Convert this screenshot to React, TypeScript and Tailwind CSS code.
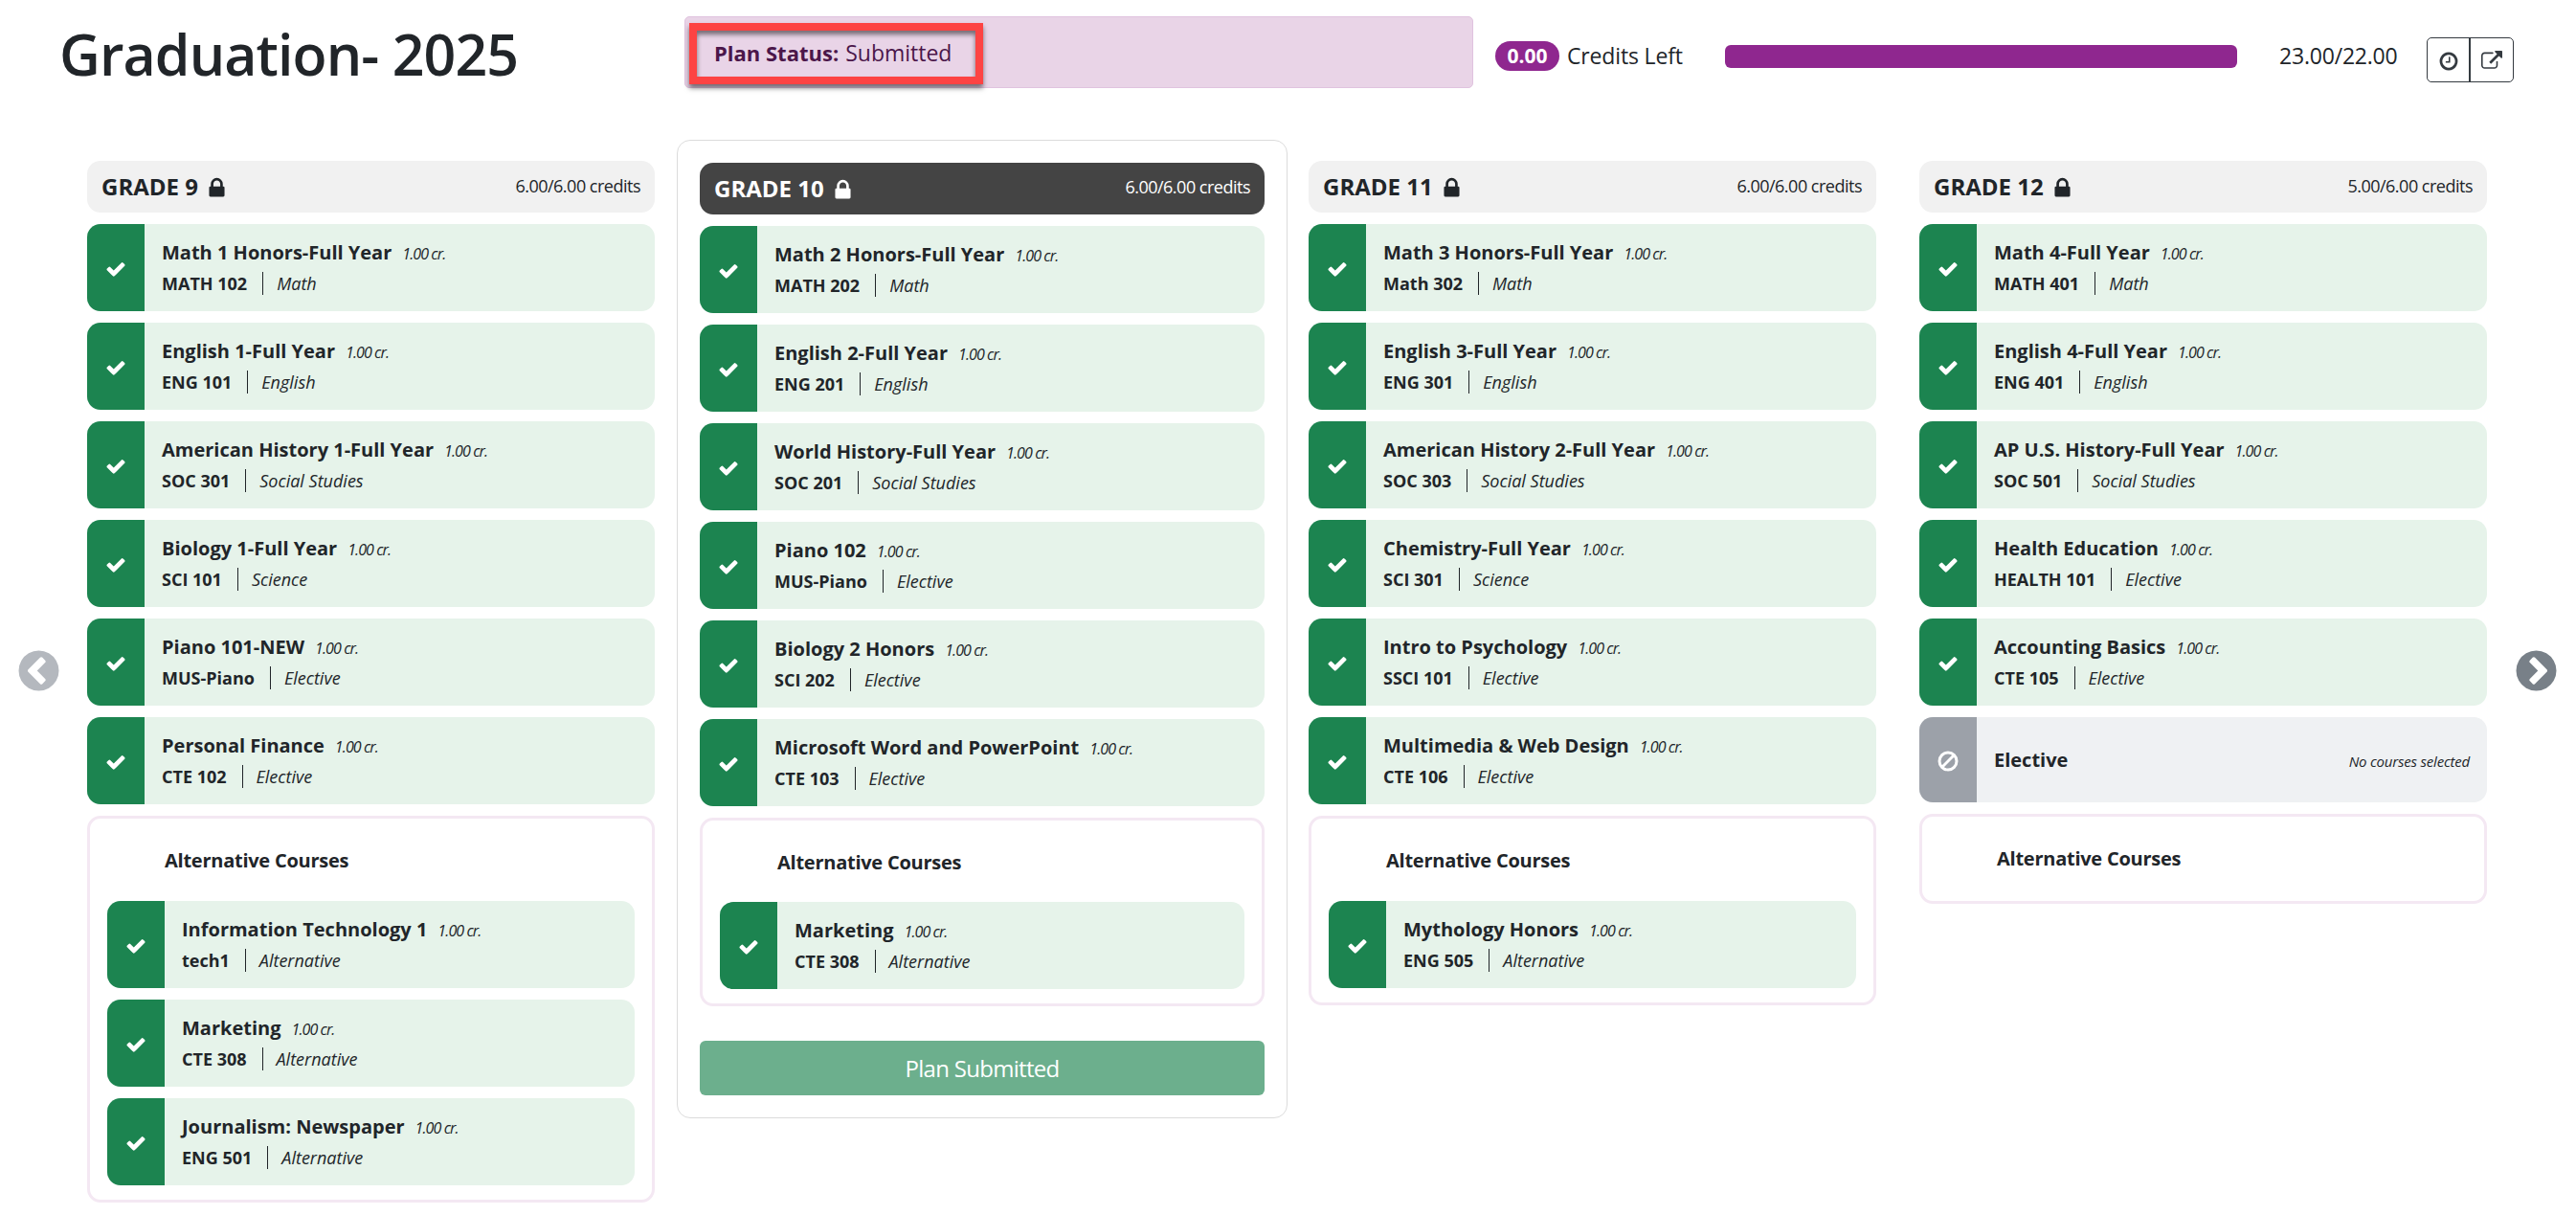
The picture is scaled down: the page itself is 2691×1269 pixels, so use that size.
interface Course {
  name: string;
  code: string;
  subject: string;
}

interface Grade {
  title: string;
  credits: string;
  current?: boolean;
  courses: Course[];
  emptySlot?: string;
  alternatives: Course[];
}

const c = (name: string, code: string, subject: string): Course => ({ name, code, subject });

const grades: Grade[] = [
  {
    title: 'GRADE 9',
    credits: '6.00/6.00 credits',
    courses: [
      c('Math 1 Honors-Full Year', 'MATH 102', 'Math'),
      c('English 1-Full Year', 'ENG 101', 'English'),
      c('American History 1-Full Year', 'SOC 301', 'Social Studies'),
      c('Biology 1-Full Year', 'SCI 101', 'Science'),
      c('Piano 101-NEW', 'MUS-Piano', 'Elective'),
      c('Personal Finance', 'CTE 102', 'Elective'),
    ],
    alternatives: [
      c('Information Technology 1', 'tech1', 'Alternative'),
      c('Marketing', 'CTE 308', 'Alternative'),
      c('Journalism: Newspaper', 'ENG 501', 'Alternative'),
    ],
  },
  {
    title: 'GRADE 10',
    credits: '6.00/6.00 credits',
    current: true,
    courses: [
      c('Math 2 Honors-Full Year', 'MATH 202', 'Math'),
      c('English 2-Full Year', 'ENG 201', 'English'),
      c('World History-Full Year', 'SOC 201', 'Social Studies'),
      c('Piano 102', 'MUS-Piano', 'Elective'),
      c('Biology 2 Honors', 'SCI 202', 'Elective'),
      c('Microsoft Word and PowerPoint', 'CTE 103', 'Elective'),
    ],
    alternatives: [c('Marketing', 'CTE 308', 'Alternative')],
  },
  {
    title: 'GRADE 11',
    credits: '6.00/6.00 credits',
    courses: [
      c('Math 3 Honors-Full Year', 'Math 302', 'Math'),
      c('English 3-Full Year', 'ENG 301', 'English'),
      c('American History 2-Full Year', 'SOC 303', 'Social Studies'),
      c('Chemistry-Full Year', 'SCI 301', 'Science'),
      c('Intro to Psychology', 'SSCI 101', 'Elective'),
      c('Multimedia & Web Design', 'CTE 106', 'Elective'),
    ],
    alternatives: [c('Mythology Honors', 'ENG 505', 'Alternative')],
  },
  {
    title: 'GRADE 12',
    credits: '5.00/6.00 credits',
    courses: [
      c('Math 4-Full Year', 'MATH 401', 'Math'),
      c('English 4-Full Year', 'ENG 401', 'English'),
      c('AP U.S. History-Full Year', 'SOC 501', 'Social Studies'),
      c('Health Education', 'HEALTH 101', 'Elective'),
      c('Accounting Basics', 'CTE 105', 'Elective'),
    ],
    emptySlot: 'Elective',
    alternatives: [],
  },
];

// Font Awesome 4 shapes on the 1792 grid
const icons = {
  check:
    'M1671 566q0 40-28 68l-724 724-136 136q-28 28-68 28t-68-28l-136-136-362-362q-28-28-28-68t28-68l136-136q28-28 68-28t68 28l294 295 656-657q28-28 68-28t68 28l136 136q28 28 28 68z',
  lock: 'M640 768h512v-192q0-106-75-181t-181-75-181 75-75 181v192zm832 96v576q0 40-28 68t-68 28h-960q-40 0-68-28t-28-68v-576q0-40 28-68t68-28h32v-192q0-184 132-316t316-132 316 132 132 316v192h32q40 0 68 28t28 68z',
  clock:
    'M1024 544v448q0 14-9 23t-23 9h-320q-14 0-23-9t-9-23v-64q0-14 9-23t23-9h224v-352q0-14 9-23t23-9h64q14 0 23 9t9 23zm416 352q0-148-73-273t-198-198-273-73-273 73-198 198-73 273 73 273 198 198 273 73 273-73 198-198 73-273zm224 0q0 209-103 385.5t-279.5 279.5-385.5 103-385.5-103-279.5-279.5-103-385.5 103-385.5 279.5-279.5 385.5-103 385.5 103 279.5 279.5 103 385.5z',
  external:
    'M1408 928v320q0 119-84.5 203.5t-203.5 84.5h-832q-119 0-203.5-84.5t-84.5-203.5v-832q0-119 84.5-203.5t203.5-84.5h704q14 0 23 9t9 23v64q0 14-9 23t-23 9h-704q-66 0-113 47t-47 113v832q0 66 47 113t113 47h832q66 0 113-47t47-113v-320q0-14 9-23t23-9h64q14 0 23 9t9 23zm384-864v512q0 26-19 45t-45 19-45-19l-176-176-652 652q-10 10-23 10t-23-10l-114-114q-10-10-10-23t10-23l652-652-176-176q-19-19-19-45t19-45 45-19h512q26 0 45 19t19 45z',
  chevronCircle:
    'M1037 1395l102-102q19-19 19-45t-19-45l-307-307 307-307q19-19 19-45t-19-45l-102-102q-19-19-45-19t-45 19l-454 454q-19 19-19 45t19 45l454 454q19 19 45 19t45-19zm627-499q0 209-103 385.5t-279.5 279.5-385.5 103-385.5-103-279.5-279.5-103-385.5 103-385.5 279.5-279.5 385.5-103 385.5 103 279.5 279.5 103 385.5z',
};

function Icon({ name, size, className }: { name: keyof typeof icons; size: number; className?: string }) {
  return (
    <svg width={size} height={size} viewBox="0 0 1792 1792" fill="currentColor" className={className}>
      <path d={icons[name]} />
    </svg>
  );
}

function CourseCard({ course }: { course: Course }) {
  return (
    <div className="flex h-[91px] overflow-hidden rounded-[14px] bg-[#e6f3ea]">
      <div className="flex w-[60px] shrink-0 items-center justify-center bg-[#1c8450] pt-[3px] text-white">
        <Icon name="check" size={22} />
      </div>
      <div className="flex flex-col pt-[14px] pl-[18px] whitespace-nowrap">
        <div className="flex h-[32px] items-baseline leading-[32px]">
          <span className="text-[20px] font-bold">{course.name}</span>
          <span className="ml-[11px] text-[16px] tracking-[-0.9px] italic">1.00 cr.</span>
        </div>
        <div className="flex h-[32px] items-center leading-[32px]">
          <span className="text-[18px] font-bold">{course.code}</span>
          <span className="mr-[14px] ml-[16px] h-[24px] w-px bg-[#212529]" />
          <span className="text-[18px] italic">{course.subject}</span>
        </div>
      </div>
    </div>
  );
}

function GradeColumn({ grade }: { grade: Grade }) {
  return (
    <div
      className={
        grade.current
          ? '-mr-px w-[638px] rounded-[14px] border border-[#dcdcdc] px-[23px] pt-[22.6px] pb-[23px]'
          : 'w-[593px] pt-[22px]'
      }
    >
      <div
        className={`flex h-[54px] items-center justify-between rounded-[14px] px-[15px] ${
          grade.current ? 'bg-[#444444] text-white' : 'bg-[#f1f1f1]'
        }`}
      >
        <div className="flex items-center">
          <h2 className="text-[24px] font-bold">{grade.title}</h2>
          <Icon name="lock" size={25} className="mt-[3px] ml-[7px]" />
        </div>
        <span className="pb-[2px] text-[18px] tracking-[-0.5px]">{grade.credits}</span>
      </div>
      <div className="mt-[12px] flex flex-col gap-[12px]">
        {grade.courses.map((course) => (
          <CourseCard key={course.code + course.name} course={course} />
        ))}
        {grade.emptySlot && (
          <div className="flex h-[89px] overflow-hidden rounded-[14px] bg-[#eff1f3]">
            <div className="flex w-[60px] items-center justify-center bg-[#9ca1a9] pt-[2px] text-white">
              <svg width="22" height="22" viewBox="0 0 22 22" fill="none" stroke="currentColor" strokeWidth="3">
                <circle cx="11" cy="11" r="9" />
                <path d="M4.8 17.2 17.2 4.8" />
              </svg>
            </div>
            <div className="flex flex-1 items-center justify-between px-[18px]">
              <span className="text-[20px] font-bold">{grade.emptySlot}</span>
              <span className="pt-[4px] text-[15px] tracking-[-0.2px] italic">No courses selected</span>
            </div>
          </div>
        )}
        <div className="rounded-[14px] border-[3px] border-[#f4e8f3] px-[18px]">
          <h3 className="flex h-[87.6px] items-center pt-px pl-[60px] text-[20px] font-bold tracking-[-0.25px]">
            Alternative Courses
          </h3>
          {grade.alternatives.length > 0 && (
            <div className="-mt-[2px] flex flex-col gap-[12px] pb-[15px]">
              {grade.alternatives.map((course) => (
                <CourseCard key={course.code} course={course} />
              ))}
            </div>
          )}
        </div>
      </div>
      {grade.current && (
        <button className="mt-[36px] block h-[57px] w-full rounded-[6px] bg-[#6caf8d] pt-px text-[24px] tracking-[-0.7px] text-white">
          Plan Submitted
        </button>
      )}
    </div>
  );
}

export default function App() {
  return (
    <div className="h-[1269px] w-[2691px] overflow-hidden bg-white font-['Open_Sans',sans-serif] text-[#212529]">
      <header className="flex h-[146px] items-start">
        <h1 className="w-[715px] pt-[16px] pl-[62px] text-[59px] leading-[80px] font-semibold tracking-[-0.9px] whitespace-nowrap">
          Graduation- 2025
        </h1>
        <div className="mt-[17px] h-[75px] w-[824px] rounded-[5px] border border-[#e0c3df] bg-[#e9d4e7] pt-[6px] pl-[4px]">
          <div className="flex h-[64px] w-[307px] items-baseline border-8 border-[#fd4343] pl-[18px] leading-[46px] whitespace-nowrap text-[#4b164a] shadow-[0_4px_5px_rgba(0,0,0,0.5),inset_0_4px_5px_rgba(0,0,0,0.5)]">
            <strong className="mr-[7px] text-[22px] font-bold">Plan Status:</strong>
            <span className="text-[23px]">Submitted</span>
          </div>
        </div>
        <span className="mt-[43px] ml-[23px] flex h-[31px] w-[67px] items-center justify-center rounded-full bg-[#8f278f] text-[21px] font-bold text-white">
          0.00
        </span>
        <span className="mt-[43px] ml-[8px] w-[165px] text-[23px] leading-[31px] tracking-[-0.15px]">Credits Left</span>
        <div className="mt-[47px] h-[24px] w-[535px] rounded-[6px] bg-[#8f278f]" />
        <span className="mt-[43px] ml-[44px] w-[154px] text-[23px] leading-[31px] tracking-[-0.2px]">23.00/22.00</span>
        <div className="mt-[39px] flex h-[47px] w-[91px] rounded-[5px] border border-[#343a40] text-[#343a40]">
          <button className="flex w-[45px] items-center justify-center border-r-2 border-[#343a40] pt-[2px]">
            <Icon name="clock" size={22} />
          </button>
          <button className="flex flex-1 items-center justify-center pt-[3px]">
            <Icon name="external" size={22} />
          </button>
        </div>
      </header>
      <main className="flex items-start">
        <button className="w-[91px] shrink-0 pt-[530px] pl-[16px] text-[#b4b8be]">
          <Icon name="chevronCircle" size={49} />
        </button>
        <div className="flex items-start gap-[23px]">
          {grades.slice(0, 3).map((grade) => (
            <GradeColumn key={grade.title} grade={grade} />
          ))}
        </div>
        <div className="ml-[45px]">
          <GradeColumn grade={grades[3]} />
        </div>
        <button className="ml-[27px] pt-[530px] text-[#788088]">
          <Icon name="chevronCircle" size={49} className="-scale-x-100" />
        </button>
      </main>
    </div>
  );
}
